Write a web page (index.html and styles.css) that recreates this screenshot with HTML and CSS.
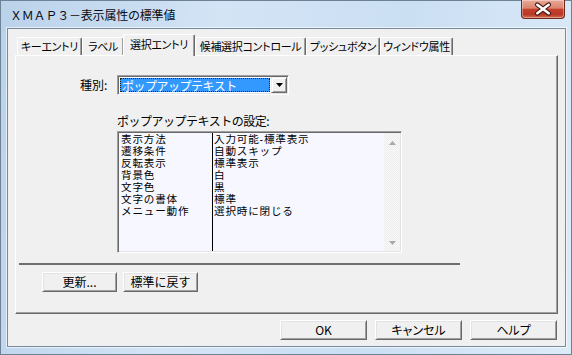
FILE: index.html
```html
<!DOCTYPE html>
<html lang="ja">
<head>
  <meta charset="UTF-8" />
  <title>ＸＭＡＰ３－表示属性の標準値</title>
  <link rel="stylesheet" href="styles.css">
</head>

<body>
  <div class="window">
    <div class="titlebar">
      <div class="title">ＸＭＡＰ３－表示属性の標準値</div>
      <button class="btn-close" aria-label="閉じる">
        <svg width="44" height="18" viewBox="0 0 44 18">
          <path d="M16 4.5 L28 13.5 M28 4.5 L16 13.5" stroke="#4a1a12" stroke-width="5" stroke-linecap="round" fill="none" />
          <path d="M16 4.5 L28 13.5 M28 4.5 L16 13.5" stroke="#fff" stroke-width="2.6" stroke-linecap="round" fill="none" />
        </svg>
      </button>
    </div>

    <div class="client">
      <div class="tabs">
        <div class="tab">キーエントリ</div>
        <div class="tab">ラベル</div>
        <div class="tab tab-active">選択エントリ</div>
        <div class="tab">候補選択コントロール</div>
        <div class="tab">プッシュボタン</div>
        <div class="tab">ウィンドウ属性</div>
      </div>

      <div class="panel">
        <div class="type-row">
          <label class="type-label">種別:</label>
          <div class="combo">
            <div class="combo-value">ポップアップテキスト</div>
            <div class="combo-arrow">
              <svg width="7" height="4" viewBox="0 0 7 4"><path d="M0 0 H7 L3.5 4 Z" fill="#000" /></svg>
            </div>
          </div>
        </div>

        <div class="caption">ポップアップテキストの設定:</div>

        <div class="listbox">
          <div class="col col-name">
            <div>表示方法</div>
            <div>遷移条件</div>
            <div>反転表示</div>
            <div>背景色</div>
            <div>文字色</div>
            <div>文字の書体</div>
            <div>メニュー動作</div>
          </div>
          <div class="col col-value">
            <div>入力可能-標準表示</div>
            <div>自動スキップ</div>
            <div>標準表示</div>
            <div>白</div>
            <div>黒</div>
            <div>標準</div>
            <div>選択時に閉じる</div>
          </div>
          <div class="scrollbar">
            <svg width="7" height="4" viewBox="0 0 7 4"><path d="M0 4 H7 L3.5 0 Z" fill="#a8a8a8" /></svg>
            <svg width="7" height="4" viewBox="0 0 7 4"><path d="M0 0 H7 L3.5 4 Z" fill="#a8a8a8" /></svg>
          </div>
        </div>

        <div class="separator"></div>

        <div class="actions">
          <button class="btn">更新...</button>
          <button class="btn">標準に戻す</button>
        </div>
      </div>

      <div class="footer">
        <button class="btn btn-wide">OK</button>
        <button class="btn btn-wide">キャンセル</button>
        <button class="btn btn-wide">ヘルプ</button>
      </div>
    </div>
  </div>
</body>
</html>
```

FILE: styles.css
```css
* {
  box-sizing: border-box;
  margin: 0;
  padding: 0;
}

body {
  width: 572px;
  height: 355px;
  overflow: hidden;
  font-family: "Noto Sans CJK JP", "Noto Sans", sans-serif;
  font-size: 12px;
  color: rgb(0, 0, 0);
  background-color: rgb(200, 221, 241);
}

.window {
  width: 572px;
  height: 355px;
  display: flex;
  flex-direction: column;
  border: 1px solid rgb(110, 130, 150);
  padding: 0 5px 7px 6px;
  background: linear-gradient(100deg, rgb(186, 210, 234) 0%, rgb(211, 228, 245) 35%, rgb(203, 223, 243) 65%, rgb(220, 235, 248) 100%);
}

/* title bar */
.titlebar {
  height: 27px;
  display: flex;
  align-items: center;
  justify-content: space-between;
}

.title {
  padding-left: 3px;
  line-height: 14px;
  font-size: 12px;
  letter-spacing: -0.2px;
  color: rgb(10, 10, 20);
}

.btn-close {
  align-self: flex-start;
  margin-top: -1px;
  margin-right: 1px;
  width: 44px;
  height: 19px;
  border: 1px solid rgb(110, 40, 30);
  border-top: none;
  border-radius: 0 0 4px 4px;
  background: linear-gradient(rgb(233, 168, 152) 0%, rgb(218, 132, 112) 45%, rgb(196, 66, 44) 52%, rgb(184, 56, 36) 80%, rgb(214, 110, 82) 100%);
  box-shadow: inset 0 0 0 1px rgba(255, 255, 255, 0.35);
  display: flex;
  align-items: center;
  justify-content: center;
}

/* client area */
.client {
  flex: 1;
  display: flex;
  flex-direction: column;
  border: 1px solid rgb(120, 138, 158);
  box-shadow: 0 0 0 1px rgba(255, 255, 255, 0.6);
  background-color: rgb(240, 240, 240);
  padding: 5px 7px 6px 7px;
}

/* tabs */
.tabs {
  height: 21px;
  display: flex;
  align-items: flex-end;
  padding-left: 2px;
}

.tab {
  height: 18px;
  display: flex;
  align-items: center;
  justify-content: center;
  padding-bottom: 2px;
  border-top: 1px solid rgb(255, 255, 255);
  border-left: 1px solid rgb(255, 255, 255);
  border-right: 1px solid rgb(105, 105, 105);
  border-radius: 2px 2px 0 0;
  box-shadow: inset -1px 0 0 rgb(160, 160, 160);
  background-color: rgb(240, 240, 240);
  font-size: 11px;
  letter-spacing: -0.3px;
  font-feature-settings: "palt";
  white-space: nowrap;
}

.tab:nth-child(1) { width: 65px; }
.tab:nth-child(2) { width: 42px; }
.tab:nth-child(3) { width: 72px; }
.tab:nth-child(4) { width: 111px; }
.tab:nth-child(5) { width: 74px; }
.tab:nth-child(6) { width: 73px; }

.tab-active {
  position: relative;
  z-index: 1;
  height: 22px;
  margin-left: -1px;
  margin-bottom: -1px;
  padding-bottom: 4px;
}

/* tab page */
.panel {
  height: 259px;
  display: flex;
  flex-direction: column;
  align-items: flex-start;
  border: 1px solid;
  border-color: rgb(255, 255, 255) rgb(105, 105, 105) rgb(105, 105, 105) rgb(255, 255, 255);
  box-shadow: inset -1px -1px 0 rgb(160, 160, 160);
}

.type-row {
  display: flex;
  align-items: center;
  margin-top: 19px;
  margin-left: 64px;
}

.type-label {
  width: 37px;
  line-height: 20px;
}

.combo {
  width: 172px;
  height: 20px;
  display: flex;
  border: 1px solid;
  border-color: rgb(160, 160, 160) rgb(255, 255, 255) rgb(255, 255, 255) rgb(160, 160, 160);
  box-shadow: inset 1px 1px 0 rgb(105, 105, 105), inset -1px -1px 0 rgb(227, 227, 227);
  padding: 1px;
  background-color: rgb(255, 255, 255);
}

.combo-value {
  flex: 1;
  margin: 1px;
  padding-left: 1px;
  line-height: 14px;
  letter-spacing: -0.5px;
  color: rgb(255, 255, 255);
  background-color: rgb(51, 153, 255);
  border: 1px dotted rgb(40, 30, 0);
  white-space: nowrap;
}

.combo-arrow {
  width: 16px;
  display: flex;
  align-items: center;
  justify-content: center;
  background-color: rgb(240, 240, 240);
  border: 1px solid;
  border-color: rgb(240, 240, 240) rgb(105, 105, 105) rgb(105, 105, 105) rgb(240, 240, 240);
  box-shadow: inset 1px 1px 0 rgb(255, 255, 255), inset -1px -1px 0 rgb(160, 160, 160);
}

.caption {
  margin-top: 19px;
  margin-left: 101px;
  line-height: 14px;
  letter-spacing: -0.5px;
}

.listbox {
  width: 285px;
  height: 122px;
  margin-top: 3px;
  margin-left: 101px;
  display: flex;
  border: 1px solid;
  border-color: rgb(160, 160, 160) rgb(255, 255, 255) rgb(255, 255, 255) rgb(160, 160, 160);
  box-shadow: inset 1px 1px 0 rgb(105, 105, 105), inset -1px -1px 0 rgb(227, 227, 227);
  padding: 1px;
  background-color: rgb(247, 247, 255);
}

.col {
  font-family: "Liberation Sans", "Noto Sans CJK JP", sans-serif;
  font-size: 10.6px;
  line-height: 12px;
  letter-spacing: 0.8px;
  white-space: nowrap;
}

.col-name {
  width: 94px;
  padding-left: 2px;
  border-right: 1px solid rgb(0, 0, 0);
}

.col-value {
  flex: 1;
  padding-left: 1px;
}

.scrollbar {
  width: 16px;
  display: flex;
  flex-direction: column;
  align-items: center;
  justify-content: space-between;
  padding: 8px 0 6px 0;
  background: repeating-conic-gradient(rgb(236, 236, 236) 0 25%, rgb(250, 250, 250) 0 50%) 0 0 / 2px 2px;
}

.separator {
  width: 441px;
  height: 2px;
  margin-top: 10px;
  margin-left: 3px;
  background-color: rgb(110, 110, 110);
}

.actions {
  display: flex;
  gap: 6px;
  margin-top: 7px;
  margin-left: 26px;
}

/* push buttons */
.btn {
  width: 75px;
  height: 20px;
  font-family: inherit;
  font-size: 12px;
  line-height: 16px;
  color: rgb(0, 0, 0);
  background-color: rgb(240, 240, 240);
  border: 1px solid;
  border-color: rgb(255, 255, 255) rgb(105, 105, 105) rgb(105, 105, 105) rgb(255, 255, 255);
  box-shadow: inset 1px 1px 0 rgb(227, 227, 227), inset -1px -1px 0 rgb(160, 160, 160);
}

.btn-wide {
  width: 87px;
  font-feature-settings: "palt";
}

.footer {
  display: flex;
  justify-content: flex-end;
  gap: 8px;
  margin-top: 6px;
  padding-right: 1px;
}
```
